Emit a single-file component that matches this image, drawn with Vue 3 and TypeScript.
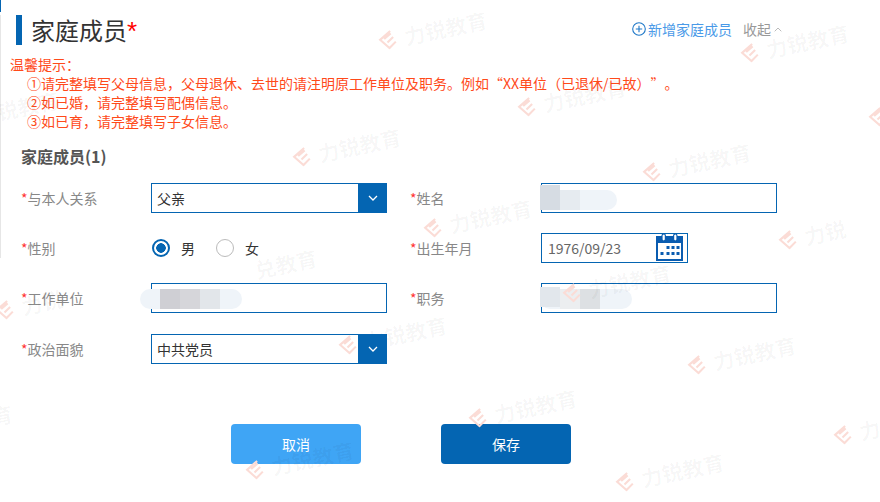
<script setup lang="ts">
interface Mark { x: number; y: number; text: string; logo: boolean }
const marks: Mark[] = [
  { x: 378, y: 27, text: '力锐教育', logo: true },
  { x: 740, y: 40, text: '力锐教育', logo: true },
  { x: 517, y: 94, text: '力锐教育', logo: true },
  { x: 868, y: 109, text: '', logo: true },
  { x: 292, y: 144, text: '力锐教育', logo: true },
  { x: 642, y: 159, text: '力锐教育', logo: true },
  { x: 423, y: 215, text: '力锐教育', logo: true },
  { x: 778, y: 227, text: '力锐', logo: true },
  { x: 255, y: 255, text: '兑教育', logo: false },
  { x: 562, y: 280, text: '力锐教育', logo: true },
  { x: -5, y: 297, text: '力锐', logo: true },
  { x: 338, y: 332, text: '力锐教育', logo: true },
  { x: 687, y: 352, text: '力锐教育', logo: true },
  { x: 468, y: 405, text: '力锐教育', logo: true },
  { x: 833, y: 422, text: '力', logo: true },
  { x: 245, y: 457, text: '力锐教育', logo: true },
  { x: 615, y: 469, text: '力锐教育', logo: true },
  { x: -3, y: 97, text: '锐教育', logo: false },
  { x: -70, y: 415, text: '力锐教育', logo: false }
]
function markStyle(m: Mark) {
  return { left: m.x + 'px', top: m.y + 'px' }
}
</script>

<template>
  <div class="page">
    <span class="edge-blue"></span>
    <span class="edge-gray"></span>

    <header class="head">
      <span class="bar"></span>
      <h1 class="title">家庭成员<em>*</em></h1>
      <div class="actions">
        <svg class="plus" viewBox="0 0 14 14" width="14" height="14">
          <circle cx="7" cy="7" r="6.3" fill="none" stroke="#1f78c8" stroke-width="1.1" />
          <path d="M3.8 7h6.4M7 3.8v6.4" stroke="#1f78c8" stroke-width="1.1" fill="none" />
        </svg>
        <span class="add">新增家庭成员</span>
        <span class="fold">收起</span>
        <svg class="caret" viewBox="0 0 8 5" width="8" height="5">
          <path d="M.7 4.3 4 1l3.3 3.3" fill="none" stroke="#bbb" stroke-width="1" />
        </svg>
      </div>
    </header>

    <div class="tips">
      <div class="tip-head">温馨提示：</div>
      <p>①请完整填写父母信息，父母退休、去世的请注明原工作单位及职务。例如“XX单位（已退休/已故）”。</p>
      <p>②如已婚，请完整填写配偶信息。</p>
      <p>③如已育，请完整填写子女信息。</p>
    </div>

    <h2 class="section">家庭成员(1)</h2>

    <div class="form">
      <label class="lab"><i>*</i>与本人关系</label>
      <div class="select">
        <span>父亲</span>
        <b class="arrow"><svg viewBox="0 0 10 6" width="10" height="6"><path d="M1 1l4 4 4-4" fill="none" stroke="#fff" stroke-width="1.3" /></svg></b>
      </div>
      <label class="lab"><i>*</i>姓名</label>
      <div class="input"></div>

      <label class="lab"><i>*</i>性别</label>
      <div class="radios">
        <span class="radio on"></span><span class="opt">男</span>
        <span class="radio"></span><span class="opt">女</span>
      </div>
      <label class="lab"><i>*</i>出生年月</label>
      <div class="input date">
        <span>1976/09/23</span>
        <svg class="cal" viewBox="0 0 27 28" width="27" height="28">
          <path d="M1 4h25v23H1z" fill="#fff" stroke="#0a5cb0" stroke-width="2" />
          <path d="M1 4h25v6H1z" fill="#0a5cb0" />
          <rect x="6" y="1" width="3.4" height="7" rx="1.7" fill="#fff" stroke="#0a5cb0" stroke-width="1.2" />
          <rect x="17.6" y="1" width="3.4" height="7" rx="1.7" fill="#fff" stroke="#0a5cb0" stroke-width="1.2" />
          <path d="M10.5 13h3v3h-3zM15.5 13h3v3h-3zM20.5 13h3v3h-3zM4.500 19h3v3h-3zM10.500 19h3v3h-3zM15.500 19h3v3h-3zM20.500 19h3v3h-3z" fill="#0a5cb0" />
        </svg>
      </div>

      <label class="lab"><i>*</i>工作单位</label>
      <div class="input"></div>
      <label class="lab"><i>*</i>职务</label>
      <div class="input"></div>

      <label class="lab last"><i>*</i>政治面貌</label>
      <div class="select last">
        <span>中共党员</span>
        <b class="arrow"><svg viewBox="0 0 10 6" width="10" height="6"><path d="M1 1l4 4 4-4" fill="none" stroke="#fff" stroke-width="1.3" /></svg></b>
      </div>
    </div>

    <div class="buttons">
      <button class="btn cancel" type="button">取消</button>
      <button class="btn save" type="button">保存</button>
    </div>

    <!-- Mosaic patches covering personal data -->
    <div class="blur pill" style="left:140px;top:289px;width:102px"></div>
    <div class="blur" style="left:160px;top:289px;width:20px;height:20px;background:#cfcfd4"></div>
    <div class="blur" style="left:180px;top:289px;width:20px;height:20px;background:#d6d6da"></div>
    <div class="blur" style="left:200px;top:289px;width:20px;height:20px;background:#e2e6ea"></div>
    <div class="blur pill" style="left:540px;top:190px;width:77px"></div>
    <div class="blur" style="left:540px;top:185px;width:20px;height:25px;background:#d6dce3"></div>
    <div class="blur" style="left:560px;top:190px;width:20px;height:20px;background:#e6ebf0"></div>
    <div class="blur pill" style="left:540px;top:289px;width:92px"></div>
    <div class="blur" style="left:540px;top:287px;width:20px;height:20px;background:#e2e7ec"></div>
    <div class="blur" style="left:560px;top:289px;width:20px;height:20px;background:#eceef0"></div>
    <div class="blur" style="left:580px;top:289px;width:20px;height:20px;background:#dde0e3"></div>

    <!-- Watermark -->
    <div v-for="(m, i) in marks" :key="i" class="mark" :style="markStyle(m)">
      <svg v-if="m.logo" viewBox="0 0 24 24" width="20" height="20">
        <path d="M17 2 3 10l9 12 9-6M8 10l9-5M11 15l8-5" fill="none" stroke="#fbdcd6" stroke-width="2.500" />
      </svg>
      <span v-if="m.text">{{ m.text }}</span>
    </div>
  </div>
</template>

<style>
html, body { margin: 0; background: #fff; }
</style>

<style scoped>
.page {
  position: relative;
  width: 880px;
  height: 502px;
  overflow: hidden;
  background: #fff;
  font-family: "Noto Sans CJK SC", "Liberation Sans", sans-serif;
  font-size: 14px;
  box-sizing: border-box;
  padding-top: 15px;
  text-spacing-trim: space-all;
}
.edge-blue { position: absolute; left: 0; top: 0; width: 1px; height: 12px; background: #0465b2; }
.edge-gray { position: absolute; left: 0; top: 15px; width: 1px; height: 243px; background: #e6e6e6; }
.head { display: flex; align-items: center; height: 30px; padding-left: 16px; }
.bar { width: 6px; height: 30px; background: #0465b2; }
.title { margin: 0 0 0 9px; font-size: 24px; font-weight: 400; color: #333; line-height: 30px; }
.title em { font-style: normal; color: #f00; font-family: "Liberation Sans", sans-serif; font-size: 26px; }
.actions { display: flex; align-items: center; margin-left: auto; padding-right: 98px; padding-bottom: 2px; }
.plus { margin-right: 2px; }
.add { color: #4a9ae8; }
.fold { color: #999; margin-left: 11px; }
.caret { margin-left: 3px; }
.tips { margin-top: 10px; padding-left: 10px; color: #ff4a1a; line-height: 19px; font-size: 14px; }
.tips p { margin: 0; padding-left: 17px; }
.section { margin: 13px 0 0 21px; font-size: 16px; line-height: 24px; font-weight: 700; color: #555; }
.form {
  display: grid;
  grid-template-columns: 130px 259px 131px 236px;
  grid-auto-rows: 30px;
  row-gap: 20px;
  margin: 15px 0 0 21px;
  align-items: center;
}
.lab { color: #888; font-size: 14px; }
.lab i { font-style: normal; color: #f33; }
.select, .input {
  width: 236px;
  height: 30px;
  box-sizing: border-box;
  border: 1px solid #0465b2;
  background: #fff;
  display: flex;
  align-items: center;
}
.select { padding-left: 5px; color: #333; justify-content: space-between; }
.arrow { position: relative; z-index: 1; width: 29px; height: 30px; margin-right: -1px; background: #0465b2; display: flex; align-items: center; justify-content: center; }
.last { margin-top: 1px; }
.date { width: 147px; padding: 0 4px 0 6px; color: #666; justify-content: space-between; }
.cal { margin-top: -2px; }
.radios { display: flex; align-items: center; }
.radio { width: 18px; height: 18px; box-sizing: border-box; border: 1.500px solid #bbb; border-radius: 50%; margin-left: 1px; }
.radio.on { border: 2px solid #0465b2; background: radial-gradient(circle, #0465b2 0 4.500px, #fff 5px); }
.opt { margin: 0 20px 0 11px; color: #333; }
.buttons { display: flex; gap: 80px; margin: 61px 0 0 231px; }
.btn {
  width: 130px;
  height: 40px;
  border: 0;
  border-radius: 4px;
  color: #fff;
  font-family: inherit;
  font-size: 14px;
  font-weight: 400;
}
.cancel { background: #3fa5f5; }
.save { background: #0465b2; }
.blur { position: absolute; }
.pill { height: 20px; border-radius: 10px; background: #eff4f9; }
.mark {
  position: absolute;
  display: flex;
  align-items: center;
  gap: 7px;
  transform: rotate(-12deg);
  transform-origin: left center;
  font-size: 21px;
  font-weight: 700;
  line-height: 30px;
  color: rgba(0, 0, 0, .035);
  white-space: nowrap;
  pointer-events: none;
}
</style>
